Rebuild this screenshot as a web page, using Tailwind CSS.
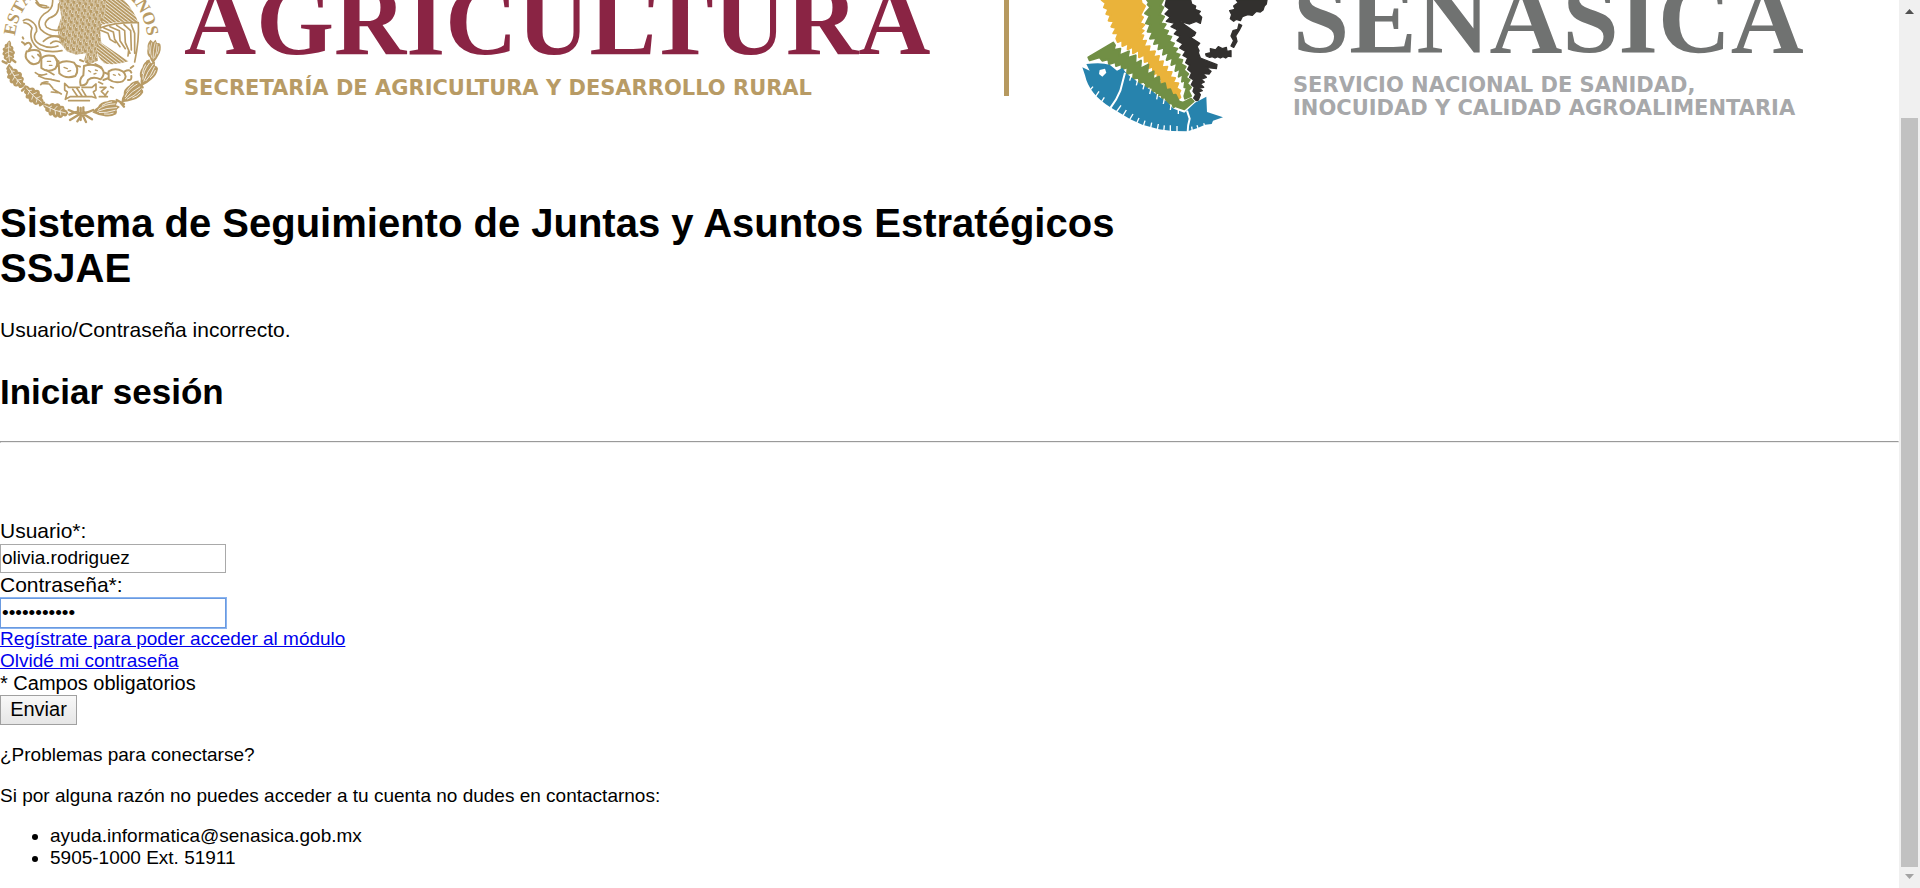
<!DOCTYPE html>
<html lang="es">
<head>
<meta charset="utf-8">
<meta name="viewport" content="width=device-width, initial-scale=1">
<title>SSJAE</title>
<script src="https://cdn.jsdelivr.net/npm/@tailwindcss/browser@4"></script>
</head>
<body class="bg-white text-black font-['Liberation_Sans',Arial,sans-serif]">
<div class="flex min-h-screen">
  <main class="min-w-0 flex-1 overflow-hidden">
    <header class="flex h-[201px] items-start overflow-hidden" aria-label="Agricultura - SENASICA">
      <!-- National coat of arms -->
      <svg class="mr-[22px] h-[124px] w-[162px] shrink-0" viewBox="0 0 486 372" fill="none" stroke="#b89b65" stroke-width="5" stroke-linecap="round" stroke-linejoin="round" aria-hidden="true">
        <defs>
          <path id="arcL" d="M45 108A198 198 0 0 1 243 -68"/>
          <path id="arcR" d="M243 -68A198 198 0 0 1 442 109"/>
          <pattern id="scales" width="18" height="20" patternUnits="userSpaceOnUse" patternTransform="rotate(8)">
            <rect width="18" height="20" fill="#b89b65" stroke="none"/>
            <path d="M2 0V7Q5 15 9 7V0M11 10V17Q14 24 18 17V10M11 -10V-3Q14 4 18 -3" stroke="#fff" stroke-width="2.2"/>
          </pattern>
          <pattern id="barbs" width="8" height="8" patternUnits="userSpaceOnUse" patternTransform="rotate(38)">
            <rect width="8" height="8" fill="#b89b65" stroke="none"/>
            <path d="M0 4H8" stroke="#fff" stroke-width="2"/>
          </pattern>
          <g id="oak">
            <path d="M-40 2Q-38 -14 -28 -10Q-24 -24 -12 -17Q-6 -28 4 -17Q14 -26 18 -12Q30 -14 30 -4Q38 0 40 6Q32 14 22 10Q16 22 6 16Q-4 28 -12 16Q-22 22 -26 10Q-34 10 -40 2Z" fill="#b89b65" stroke="none"/>
            <path d="M-32 0Q0 -4 34 4M-16 -2L-20 -10M-12 -2L-18 10M0 -2L-4 -12M4 0L-2 12M16 0L14 -8M20 2L14 8" stroke="#fff" stroke-width="2"/>
          </g>
          <g id="laurel">
            <path d="M-40 0Q-30 -10 -20 -12Q-10 -26 12 -22Q26 -26 42 -14Q36 -8 34 -4Q42 0 44 4Q34 8 32 10Q34 18 28 22Q8 28 -10 18Q-26 12 -40 0Z" fill="#b89b65" stroke="none"/>
            <path d="M-24 0Q6 -4 34 3M-20 -5Q0 -16 32 -9M-20 5Q0 12 28 10M-6 -14Q8 -19 24 -17M-6 13Q8 19 20 17" stroke="#fff" stroke-width="2.2"/>
          </g>
        </defs>
        <g fill="#b89b65" stroke="none" font-family="Liberation Serif, serif" font-size="52" font-weight="bold">
          <text><textPath href="#arcL">ESTA</textPath></text>
          <text text-anchor="end"><textPath href="#arcR" startOffset="100%">CANOS</textPath></text>
        </g>
        <!-- Eagle: body, wing and tail -->
        <path d="M176 0H330L318 40L300 88L304 128L290 150L294 182L270 192L252 182L258 160L228 164L200 154L180 128L172 86L184 52Z" fill="url(#scales)" stroke="none"/>
        <path d="M300 126L386 184Q344 198 312 190Q290 170 290 146Z" fill="url(#barbs)" stroke="none"/>
        <path d="M318 0H372Q404 34 415 68Q360 60 300 76Q322 44 318 0Z" fill="url(#barbs)" stroke="none"/>
        <g stroke-width="5">
          <path d="M300 84Q344 66 415 68Q418 120 404 186M300 90L324 100L330 118L346 128M312 84L340 96L344 118L360 140M330 80L358 92L360 122L376 146M350 76L374 92L376 128L390 160M372 74L392 92L394 150M394 74L404 100V160M386 150L384 168"/>
        </g>
        <!-- Serpent -->
        <g stroke-width="5">
          <path d="M70 62Q78 54 92 62Q112 74 110 94Q92 118 122 134Q150 148 174 138"/>
          <path d="M72 68Q88 70 96 84Q84 122 116 146Q146 160 186 152"/>
          <path d="M158 0Q160 30 132 42Q108 64 122 88Q146 112 178 108"/>
          <path d="M176 12Q178 46 148 54Q128 70 140 82Q164 98 188 86"/>
          <path d="M108 0L118 14L140 18M108 8Q124 28 146 22"/>
          <path d="M130 124Q158 96 196 120M152 130Q166 118 182 128"/>
        </g>
        <!-- Prickly pears -->
        <g stroke-width="6">
          <path d="M74 134Q90 120 94 140L84 154Q104 146 118 154Q128 172 116 188Q96 200 84 182Q72 172 80 154"/>
          <path d="M124 176Q134 162 162 168Q180 186 166 206Q144 220 124 204ZM176 190Q196 178 222 188Q240 208 226 228Q196 238 178 220Z"/>
          <path d="M252 198Q282 188 306 206Q318 222 302 238Q278 228 264 240Q260 258 242 256Q236 238 250 226Z"/>
          <path d="M326 214Q346 202 368 214Q386 230 368 244Q344 252 326 238ZM314 218L324 222M310 240L326 234M374 214Q390 206 394 218M384 240Q396 242 394 228M392 204L400 198"/>
          <path d="M96 168L102 174M142 184L152 184M148 196H156M192 202L202 206M204 214L212 212M266 212L272 216M286 210L292 212M282 222L288 220M340 224L346 226M356 222L360 226" stroke-width="4"/>
          <path d="M68 112L70 116M66 126L72 130M114 164L120 170M170 180L176 184M228 196L240 200M240 180L250 184M258 186L268 192M286 192L304 202"/>
        </g>
        <!-- Lake and base -->
        <g stroke-width="5">
          <path d="M106 218Q120 230 140 222M116 228L136 236L154 238M124 250L148 252L158 264M138 210L162 224M152 238L178 244M160 268L184 282M154 276L174 278M122 254Q130 244 144 246"/>
          <path d="M194 250L206 262H238M194 250V270L202 276L196 298L210 290H276M246 262H276L288 252V270L280 276L288 294L276 290M218 268L232 288M230 264L246 288M246 268L258 288M206 302H268"/>
          <path d="M300 262H318L304 274L318 288M324 274L314 288M298 290H322M332 260L340 264M296 246L308 252"/>
        </g>
        <!-- Oak and laurel wreath -->
        <use href="#oak" transform="translate(26 156) rotate(-95) scale(.85)"/>
        <use href="#oak" transform="translate(45 230) rotate(-128)"/>
        <use href="#oak" transform="translate(100 286) rotate(-140)"/>
        <use href="#oak" transform="translate(166 330) rotate(-164)"/>
        <use href="#laurel" transform="translate(461 156) rotate(-86) scale(.85)"/>
        <use href="#laurel" transform="translate(442 222) rotate(-64)"/>
        <use href="#laurel" transform="translate(394 280) rotate(-42)"/>
        <use href="#laurel" transform="translate(316 328) rotate(-14)"/>
        <path d="M8 184L20 190M38 180L46 186M22 206L28 196M76 262L66 272M60 260L72 252M120 316L132 308M362 308L372 320M350 300L372 312M416 250L428 262M442 184L440 192M208 344L228 336M210 360L236 344M232 364L244 346M258 366L248 346M276 358L254 344M206 330Q242 350 280 330M234 322V338M250 322V338M242 324V360" stroke-width="7"/>
      </svg>
      <div class="w-[820px] shrink-0 whitespace-nowrap">
        <div class="font-['Liberation_Serif',serif] text-[100px] leading-[41px] font-bold text-[#8a2444]">AGRICULTURA</div>
        <div class="mt-[35px] font-['DejaVu_Sans',sans-serif] text-[21px] leading-[24px] font-bold text-[#b89b65]">SECRETARÍA DE AGRICULTURA Y DESARROLLO RURAL</div>
      </div>
      <div class="h-[96px] w-[5px] shrink-0 bg-[#b6995f]"></div>
      <!-- Map of Mexico made of crops, cattle and fish -->
      <svg class="mr-[14px] ml-[70px] h-[132px] w-[200px] shrink-0" viewBox="60 0 600 396" aria-hidden="true">
        <g stroke-width="6" stroke-linejoin="round">
        <path fill="#eab33a" stroke="#eab33a" d="M128 0L140 10L135 22L148 28L142 42L155 46L149 62L165 64L157 80L172 84L163 100L178 100L172 116L176 126L190 120L190 138L208 130L206 148L222 140L222 160L240 150L240 172L256 164L257 186L270 182L269 204L282 200L282 224L296 218L295 240L308 236L307 258L320 254L322 276L334 272L340 290L346 286L356 298L364 292L360 280L364 272L352 264L358 250L342 248L348 234L332 232L338 216L320 216L325 200L308 202L312 184L296 186L300 168L282 172L288 154L268 156L272 139L254 140L261 122L246 124L253 106L240 106L254 92L244 88L256 74L242 70L252 52L244 46L258 18L248 10L246 0Z"/>
        <path fill="#718f45" stroke="#718f45" d="M264 0L270 8L266 14L274 22L258 40L272 48L261 70L274 74L266 95L282 96L273 116L292 114L285 132L302 128L298 148L316 142L312 164L330 156L323 180L342 172L337 195L354 188L349 213L364 206L359 230L372 222L369 245L379 240L376 262L384 260L376 288L378 296L396 288L388 272L396 262L384 250L392 240L380 232L388 222L374 210L380 200L366 192L370 180L354 176L362 164L346 158L355 146L338 142L345 130L330 124L337 110L320 106L327 93L310 88L320 73L304 70L315 50L302 44L313 22L304 16L312 0Z"/>
        <path fill="#718f45" stroke="#718f45" d="M88 172L163 128L168 136L164 150L184 146L181 166L210 154L206 174L230 166L229 191L246 182L244 206L268 194L264 223L284 214L282 238L300 230L303 254L318 250L322 270L334 268L341 286L350 284L360 304L372 308L396 296L404 304L376 328L348 318L344 322L338 310L326 311L322 298L311 300L307 284L294 288L291 272L276 276L274 258L257 264L258 244L240 250L240 232L222 237L224 216L204 222L206 202L188 208L188 192L171 198L170 186L150 192L148 178L130 182L122 172L92 181Z"/>
        </g>
        <g fill="#32302e" stroke="#32302e" stroke-width="4" stroke-linejoin="round">
          <path d="M322 0H395L398 12L410 18L408 28L424 34L418 42L428 52L424 70L412 64L392 72L362 64L410 98L406 106L394 112L422 130L414 140L420 152L418 158L424 174L474 194L472 206L440 202L456 214L450 222L430 220L442 232L426 238L436 246L424 252L434 262L420 264L430 272L418 276L424 284L418 300L412 302L404 294L410 284L402 274L406 262L397 254L404 240L392 232L398 218L386 208L392 196L380 188L386 174L372 166L380 154L362 144L372 132L354 122L364 110L346 102L356 90L336 80L348 70L322 64L334 52L318 42L331 28L318 18Z"/>
          <path d="M440 162L455 158L454 146L470 150L478 140L490 146L502 142L504 154L516 152V170L508 168L500 174L492 170L484 174L476 170L468 174L460 170L452 172L442 168Z"/>
          <path d="M540 72L548 76L540 92L530 108L534 124L524 142L516 138L524 122L516 108L522 92L536 88Z"/>
          <path d="M532 0H624L622 12L616 18L612 30L604 36L592 34L580 46L566 44L550 50L544 62L532 58L524 64L514 56L518 44L512 32L528 28L524 18L538 8Z"/>
        </g>
        <path fill="#2783ad" d="M70 202L92 212L82 192Q126 186 152 194L174 212L190 204L204 222L220 234L242 250L260 260L280 274L300 290L322 304L344 326L376 338L408 308L442 290L444 336L492 352L462 362L458 372L438 374L416 384L386 394L340 393L300 388L250 374L214 358L154 322Q90 282 78 226Z"/>
        <path d="M88 276L102 260M104 298L120 274M122 314L136 292M172 336L186 316M190 350L202 330M210 362L222 342M232 372L240 354M252 382L258 362M274 388L278 368M294 394L298 372M314 396L316 376M334 396L334 376M354 396L354 378M400 394L398 380M418 388L414 376M438 380L434 370M216 228L212 242M236 240L232 256M256 252L252 268M276 266L272 282M296 282L293 298M316 296L313 312M336 314L334 330M358 328L358 342" fill="none" stroke="#fff" stroke-width="4"/>
        <path d="M198 218L184 272Q172 302 154 324M384 332L392 356Q386 376 386 396" fill="none" stroke="#fff" stroke-width="6"/>
        <path d="M122 210L138 206L142 218L130 230L120 222Z" fill="#fff"/>
      </svg>
      <div class="shrink-0 whitespace-nowrap">
        <div class="font-['Liberation_Serif',serif] text-[101px] leading-[39px] font-bold text-[#707271]">SENASICA</div>
        <div class="mt-[35px] font-['DejaVu_Sans',sans-serif] text-[21px] leading-[23px] font-bold text-[#a7a8aa]">SERVICIO NACIONAL DE SANIDAD,<br>INOCUIDAD Y CALIDAD AGROALIMENTARIA</div>
      </div>
    </header>

    <h1 class="text-[40px] leading-[45px] font-bold">Sistema de Seguimiento de Juntas y Asuntos Estratégicos<br>SSJAE</h1>
    <p class="mt-[27px] text-[21px] leading-[24px]">Usuario/Contraseña incorrecto.</p>
    <h2 class="mt-[30px] text-[35px] leading-[40px] font-bold">Iniciar sesión</h2>
    <hr class="mt-[29px] h-[2px] border border-t-[#9a9a9a] border-r-[#eeeeee] border-b-[#eeeeee] border-l-[#9a9a9a]">

    <form class="mt-[76px] flex flex-col items-start" onsubmit="return false">
      <label for="usuario" class="pb-[2px] text-[21px] leading-[23px]">Usuario*:</label>
      <input id="usuario" type="text" value="olivia.rodriguez" class="h-[29px] w-[226px] border border-[#a9a9a9] bg-white px-px pb-[2px] text-[19px] leading-[22px] outline-none">
      <label for="contrasena" class="pb-[2px] text-[21px] leading-[23px]">Contraseña*:</label>
      <input id="contrasena" type="password" value="contrasena1" class="h-[30px] w-[226px] border border-[#6a9ae0] bg-white px-px text-[19px] leading-[22px] outline outline-[#8ab4f0]">
      <a href="#registro" class="text-[19px] leading-[22px] text-[#0000ee] underline">Regístrate para poder acceder al módulo</a>
      <a href="#recuperar" class="text-[19px] leading-[22px] text-[#0000ee] underline">Olvidé mi contraseña</a>
      <p class="text-[20px] leading-[23px]">* Campos obligatorios</p>
      <button type="submit" class="h-[30px] w-[77px] border border-[#a0a0a0] bg-linear-to-b from-[#f8f8f8] to-[#e6e6e6] pb-[2px] text-[20px] leading-[22px]">Enviar</button>
    </form>

    <section class="text-[19px] leading-[22px]">
      <p class="mt-[19px]">¿Problemas para conectarse?</p>
      <p class="mt-[19px]">Si por alguna razón no puedes acceder a tu cuenta no dudes en contactarnos:</p>
      <ul class="mt-[18px] list-disc pl-[50px]">
        <li>ayuda.informatica@senasica.gob.mx</li>
        <li>5905-1000 Ext. 51911</li>
      </ul>
    </section>
  </main>

  <!-- Scroll bar -->
  <aside class="flex w-[21px] shrink-0 flex-col items-center bg-[#f0f0f0]" aria-hidden="true">
    <svg class="mt-[9px] h-[5px] w-[9px]" viewBox="0 0 9 5"><path d="M0 5L4.500 0L9 5Z" fill="#505050"/></svg>
    <div class="mt-[104px] w-[17px] flex-1 bg-[#c1c1c1]"></div>
    <svg class="mt-[7px] mb-[9px] h-[5px] w-[9px]" viewBox="0 0 9 5"><path d="M0 0L4.500 5L9 0Z" fill="#a3a3a3"/></svg>
  </aside>
</div>
</body>
</html>
